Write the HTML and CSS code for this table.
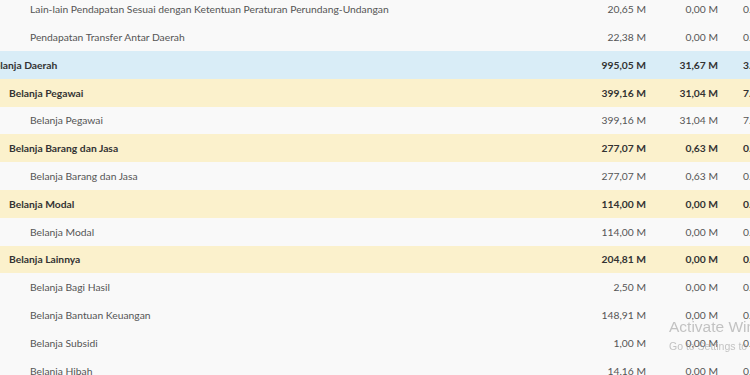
FILE: index.html
```html
<!DOCTYPE html>
<html lang="id">
<head>
<meta charset="utf-8">
<title>Realisasi Anggaran</title>
<link rel="stylesheet" href="styles.css">
</head>
<body>
<div class="scroller">
<table class="budget">
  <colgroup>
    <col class="c-name"><col class="c-num"><col class="c-num"><col class="c-pct">
  </colgroup>
  <tbody>
    <tr class="lv3"><td class="name">Lain-lain Pendapatan Sesuai dengan Ketentuan Peraturan Perundang-Undangan</td><td>20,65 M</td><td>0,00 M</td><td class="pct">0.00%</td></tr>
    <tr class="lv3"><td class="name">Pendapatan Transfer Antar Daerah</td><td>22,38 M</td><td>0,00 M</td><td class="pct">0.00%</td></tr>
    <tr class="lv1"><td class="name">Belanja Daerah</td><td>995,05 M</td><td>31,67 M</td><td class="pct">3.18%</td></tr>
    <tr class="lv2"><td class="name">Belanja Pegawai</td><td>399,16 M</td><td>31,04 M</td><td class="pct">7.78%</td></tr>
    <tr class="lv3"><td class="name">Belanja Pegawai</td><td>399,16 M</td><td>31,04 M</td><td class="pct">7.78%</td></tr>
    <tr class="lv2"><td class="name">Belanja Barang dan Jasa</td><td>277,07 M</td><td>0,63 M</td><td class="pct">0.23%</td></tr>
    <tr class="lv3"><td class="name">Belanja Barang dan Jasa</td><td>277,07 M</td><td>0,63 M</td><td class="pct">0.23%</td></tr>
    <tr class="lv2"><td class="name">Belanja Modal</td><td>114,00 M</td><td>0,00 M</td><td class="pct">0.00%</td></tr>
    <tr class="lv3"><td class="name">Belanja Modal</td><td>114,00 M</td><td>0,00 M</td><td class="pct">0.00%</td></tr>
    <tr class="lv2"><td class="name">Belanja Lainnya</td><td>204,81 M</td><td>0,00 M</td><td class="pct">0.00%</td></tr>
    <tr class="lv3"><td class="name">Belanja Bagi Hasil</td><td>2,50 M</td><td>0,00 M</td><td class="pct">0.00%</td></tr>
    <tr class="lv3"><td class="name">Belanja Bantuan Keuangan</td><td>148,91 M</td><td>0,00 M</td><td class="pct">0.00%</td></tr>
    <tr class="lv3"><td class="name">Belanja Subsidi</td><td>1,00 M</td><td>0,00 M</td><td class="pct">0.00%</td></tr>
    <tr class="lv3"><td class="name">Belanja Hibah</td><td>14,16 M</td><td>0,00 M</td><td class="pct">0.00%</td></tr>
  </tbody>
</table>
</div>
<div class="watermark">
  <div class="wm-title">Activate Windows</div>
  <div class="wm-sub">Go to Settings to activate Windows.</div>
</div>
</body>
</html>
```

FILE: styles.css
```css
html, body {
  margin: 0;
  padding: 0;
  background: #f9f9f9;
  overflow: hidden;
}

body {
  font-family: "Lato", "Liberation Sans", sans-serif;
  font-size: 10.3px;
  color: #555;
}

.scroller {
  width: 750px;
  height: 375px;
  overflow: hidden;
}

.budget {
  border-collapse: collapse;
  table-layout: fixed;
  width: 800px;
  margin: -4.6px 0 0 -20px;
}

.c-name { width: 602px; }
.c-num { width: 72px; }
.c-pct { width: 54px; }

.budget td {
  height: 27.8px;
  padding: 0 8px 0 0;
  box-sizing: border-box;
  text-align: right;
  white-space: nowrap;
  vertical-align: middle;
}

.budget td.name {
  text-align: left;
  padding-left: 8px;
}

.budget td.pct {
  text-align: left;
  padding: 0 0 0 17px;
}

.lv1 td {
  background: #d9edf7;
  font-weight: 700;
  color: #333;
}

.lv2 td {
  background: #fbf1cc;
  font-weight: 700;
  color: #333;
}

.lv2 td.name { padding-left: 29px; }

.lv3 td { background: #f9f9f9; }

.lv3 td.name { padding-left: 50px; }

.watermark {
  position: fixed;
  left: 669px;
  top: 317px;
  color: rgba(150, 150, 150, 0.55);
  white-space: nowrap;
  pointer-events: none;
}

.wm-title {
  font-family: "Liberation Sans", sans-serif;
  font-size: 15.5px;
  line-height: 20px;
}

.wm-sub {
  font-family: "Liberation Sans", sans-serif;
  font-size: 10.5px;
  line-height: 18px;
}
```
